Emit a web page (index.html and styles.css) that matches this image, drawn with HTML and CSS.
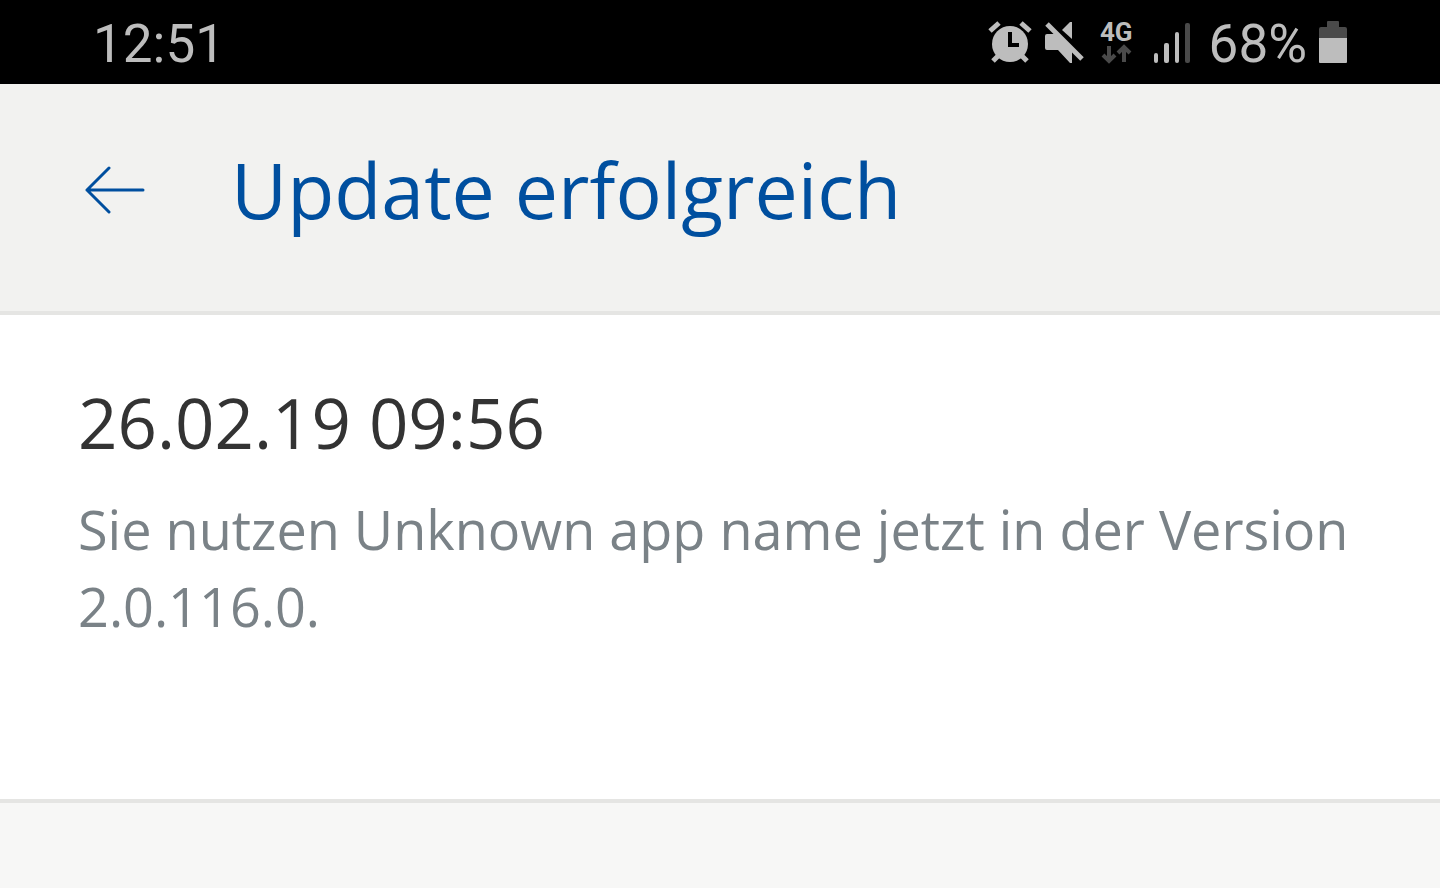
FILE: index.html
```
<!DOCTYPE html>
<html lang="de">
<head>
  <meta charset="UTF-8" />
  <meta name="viewport" content="width=device-width, initial-scale=1.0" />
  <title>Update erfolgreich</title>
  <link rel="stylesheet" href="styles.css">
</head>
<body>
  <div class="status-bar">
    <span class="time">12:51</span>
    <div class="status-icons">
      <svg class="icon-alarm" width="44" height="44" viewBox="0 0 44 44" aria-hidden="true">
        <path d="M2 9l9-8M33 1l9 8" stroke="#bdbdbd" stroke-width="5" fill="none" />
        <path d="M11 33l-6 6M33 33l6 6" stroke="#bdbdbd" stroke-width="5" fill="none" />
        <circle cx="22" cy="22" r="18" fill="#bdbdbd" />
        <path d="M22 10v13h9" stroke="#000" stroke-width="4" fill="none" />
      </svg>
      <svg class="icon-mute" width="40" height="44" viewBox="0 0 40 44" aria-hidden="true">
        <path d="M3 12h9l16 17v12h-2L14 28H3q-2 0-2-2V14q0-2 2-2z" fill="#bdbdbd" />
        <path d="M18 8l8-8h2v17z" fill="#bdbdbd" />
        <path d="M6 -1l33 33" stroke="#000" stroke-width="3" />
        <path d="M3 2l35 35" stroke="#bdbdbd" stroke-width="5" />
      </svg>
      <div class="network">
        <span>4G</span>
        <svg width="32" height="20" viewBox="0 0 32 20" aria-hidden="true">
          <path d="M9 2v14M3 11l6 6 6-6M24 18V3M18 9l6-6 6 6" stroke="#4a4a4a" stroke-width="4" fill="none" />
        </svg>
      </div>
      <svg class="icon-signal" width="38" height="44" viewBox="0 0 38 44" aria-hidden="true">
        <rect x="1" y="31" width="4" height="10" rx="2" fill="#bdbdbd" />
        <rect x="11" y="21" width="5" height="20" rx="2" fill="#bdbdbd" />
        <rect x="22" y="10" width="4" height="31" rx="2" fill="#bdbdbd" />
        <rect x="32" y="1" width="5" height="40" rx="2" fill="#4a4a4a" />
      </svg>
      <span class="percent">68%</span>
      <svg class="icon-battery" width="28" height="44" viewBox="0 0 28 44" aria-hidden="true">
        <path d="M8 0q0-1 1-1h10q1 0 1 1v5h6q2 0 2 2v10H0V7q0-2 2-2h6z" fill="#4a4a4a" />
        <path d="M0 16h28v24q0 1-1 1H1q-1 0-1-1z" fill="#bdbdbd" />
      </svg>
    </div>
  </div>

  <header class="header">
    <button class="back" type="button" aria-label="Zurück">
      <svg width="60" height="48" viewBox="0 0 60 48" aria-hidden="true">
        <path d="M58 24H2M24 2L2 24l22 22" stroke="#004f9f" stroke-width="3" stroke-linecap="round" stroke-linejoin="round" fill="none" />
      </svg>
    </button>
    <h1>Update erfolgreich</h1>
  </header>

  <main class="message">
    <h2>26.02.19 09:56</h2>
    <p>Sie nutzen Unknown app name jetzt in der Version 2.0.116.0.</p>
  </main>
</body>
</html>
```
FILE: styles.css
```
body {
  margin: 0;
  background-color: #f7f7f6;
  font-family: "Open Sans", "Noto Sans", sans-serif;
}

.status-bar {
  display: flex;
  justify-content: space-between;
  align-items: center;
  padding: 12px 93px 8px;
  background-color: #000;
  color: #bdbdbd;
  font-family: Roboto, sans-serif;
  font-size: 53px;
  line-height: 64px;
}

.status-icons {
  display: flex;
  align-items: center;
}

.status-icons svg {
  overflow: visible;
}

.icon-mute {
  margin-left: 12px;
}

.network {
  display: flex;
  flex-direction: column;
  align-items: center;
  margin-left: 16px;
  padding-bottom: 4px;
  font-size: 26px;
  font-weight: bold;
  line-height: 24px;
}

.icon-signal {
  margin-left: 20px;
}

.percent {
  margin: 0 12px 0 18px;
}

.header {
  display: flex;
  align-items: center;
  padding: 53px 85px 69px;
  border-bottom: 4px solid #e5e5e3;
  background-color: #f2f2f0;
}

.back {
  display: flex;
  margin-right: 86px;
  padding: 0;
  border: none;
  background: none;
  cursor: pointer;
}

h1 {
  margin: 0;
  color: #004f9f;
  font-size: 77px;
  font-weight: normal;
  line-height: 105px;
}

.message {
  padding: 58px 78px 154px;
  border-bottom: 4px solid #e5e5e3;
  background-color: #fff;
}

h2 {
  margin: 0 0 20px;
  color: #333;
  font-size: 69px;
  font-weight: normal;
  line-height: 98px;
}

p {
  margin: 0;
  color: #7a8287;
  font-size: 54px;
  line-height: 77px;
}
```
